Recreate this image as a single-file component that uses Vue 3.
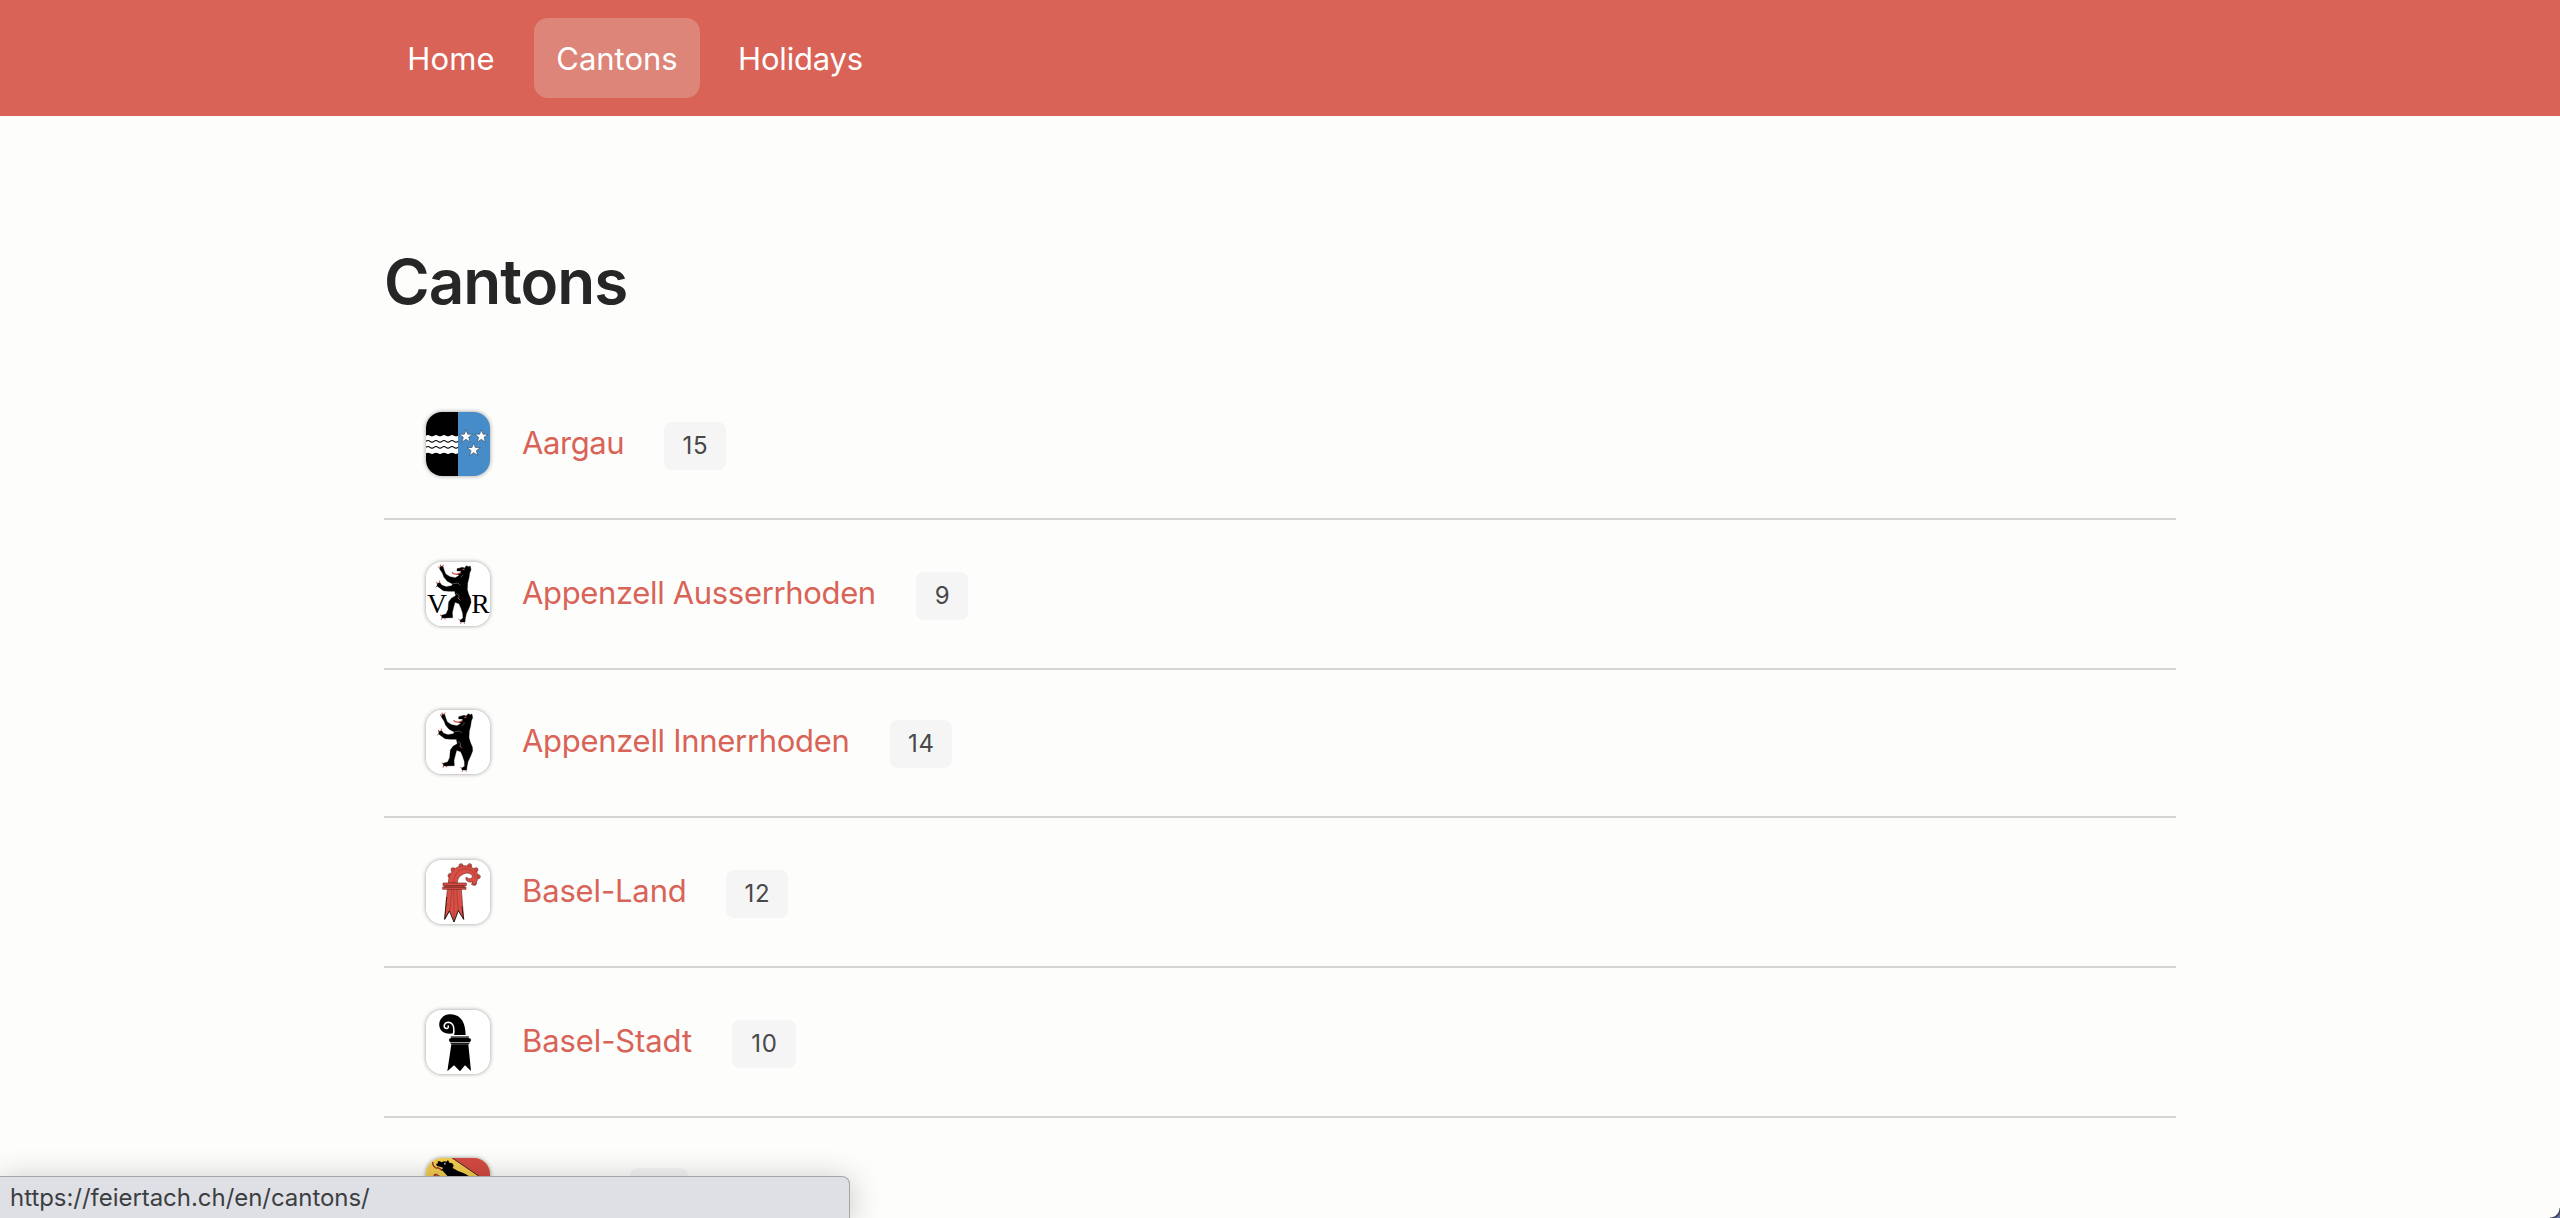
<script setup>
const nav = [
  { label: 'Home', width: 134, tracking: 0.1 },
  { label: 'Cantons', width: 166, active: true },
  { label: 'Holidays', width: 169, tracking: -0.2 },
]

const cantons = [
  { id: 'ag', name: 'Aargau', count: 15, width: 102, badge: 62, tracking: -0.4, box: '33 36 192 192' },
  { id: 'ar', name: 'Appenzell Ausserrhoden', count: 9, width: 354, badge: 52, tracking: -0.34, box: '33 36 192 192' },
  { id: 'ai', name: 'Appenzell Innerrhoden', count: 14, width: 328, badge: 62, tracking: -0.3, box: '33 29 192 192' },
  { id: 'bl', name: 'Basel-Land', count: 12, width: 164, badge: 62, tracking: -0.15, box: '33 29 192 192' },
  { id: 'bs', name: 'Basel-Stadt', count: 10, width: 170, badge: 64, tracking: -0.1, box: '33 29 192 192' },
  { id: 'be', name: 'Bern', count: 11, width: 68, badge: 58, tracking: 0, box: '167 174 192 192' },
]
</script>

<template>
  <div class="page">
    <header class="topbar">
      <nav class="nav">
        <a
          v-for="item in nav"
          :key="item.label"
          class="nav-link"
          :class="{ active: item.active }"
          :style="{ width: item.width + 'px', letterSpacing: (item.tracking || 0) + 'px' }"
        >{{ item.label }}</a>
      </nav>
    </header>

    <main class="content">
      <h1>Cantons</h1>
      <ul class="list">
        <li v-for="c in cantons" :key="c.id" class="row" :class="c.id">
          <svg class="flag" :viewBox="c.box">
            <g v-if="c.id === 'ag'">
              <path fill="#000" d="M33 36h96v192H33z" />
              <path fill="#468cc8" d="M129 36h96v192h-96z" />
              <path fill="#fff" d="M33 107q6-4 12 0t12 0 12 0 12 0 12 0 12 0 12 0 12 0V160q-6 4-12 0t-12 0-12 0-12 0-12 0-12 0-12 0-12 0z" />
              <path class="wave" d="M33 124q6-5 12 0t12 0 12 0 12 0 12 0 12 0 12 0 12 0M33 142q6-5 12 0t12 0 12 0 12 0 12 0 12 0 12 0 12 0" />
              <path
                v-for="(p, i) in [[153, 109], [199, 109], [176, 149]]"
                :key="i"
                class="star"
                :transform="`translate(${p[0]} ${p[1]})`"
                d="M0-20 5-6.5 20-6.2 8 3 12.5 17.5 0 9-12.5 17.5-8 3-20-6.2-5-6.5z"
              />
            </g>

            <g v-else-if="c.id === 'ar' || c.id === 'ai'">
              <path fill="#fff" d="M30 25h200v210H30z" />
              <g v-if="c.id === 'ar'" class="initials">
                <text x="36" y="189" textLength="56">V</text>
                <text x="169" y="189" textLength="52">R</text>
              </g>
              <g :transform="c.id === 'ar' ? 'translate(-5 7)' : ''">
                <path
                  class="bear"
                  d="M131 49 147 45 154 47 159 40 166 43 171 41 173 52 169 62 167 76 163 92 162 112 166 126 172 140 173 151 167 167 159 184 156 199 155 209 141 209 140 204 149 197 148 183 143 168 137 154 125 150 121 164 117 180 118 196 86 197 84 189 98 185 104 172 106 149 114 138 127 130 124 117 106 117 90 115 78 106 71 101 72 93 80 91 86 99 99 103 115 100 118 95 102 87 92 75 87 62 79 50 81 42 89 42 92 52 97 65 110 73 126 76 138 69 131 66 142 61 143 56 131 56z"
                />
                <path class="fur" d="M119 94 134 92 141 99M128 123l9 6-1 10M142 76l7-9" />
                <path class="tongue" d="M142 61 131 66 120 64 116 59M148 52l6-2" />
                <path class="claws" d="M79 49l-3-7M82 43l-1-6M88 43l2-6M71 101l-4 4M72 95l-2-6M79 91l0-6M85 190l-5-2M86 197l-2 5M95 197l0 4M141 204l-5-3M143 210l-1 4M152 210l2 4M133 136l8 8" />
              </g>
            </g>

            <g v-else-if="c.id === 'bl'">
              <path fill="#fff" d="M30 25h200v200H30z" />
              <g class="crozier">
                <path
                  v-for="(p, i) in [[105, 76], [114, 58], [138, 46], [164, 46], [183, 58], [190, 79], [178, 99]]"
                  :key="i"
                  :transform="`translate(${p[0]} ${p[1]})`"
                  d="M-6 0a6 6 0 1 1 12 0a6 6 0 1 1-12 0z"
                />
                <path d="M100 98C101 68 116 48 148 46C176 46 193 66 188 87L181 104L170 103L173 94C160 98 149 90 154 80C160 88 172 87 172 78C170 69 157 65 145 71C133 77 127 85 127 98z" />
                <path class="rib" d="M116 97C116 76 128 57 149 55C169 55 183 69 180 82" />
                <path d="M97 117 89 207 104 181 117 215 130 180 146 207 139 117z" />
                <path class="rib" d="M111 118 104 181M117 118v93M125 118l5 62" />
                <path d="M84 98h70v8H84zM89 106h59v5H89zM83 110h70v7H83z" />
              </g>
              <path class="tips" d="M95 140 89 207l14-25 14 33 13-34 16 26-5-39" />
            </g>

            <g v-else-if="c.id === 'bs'">
              <path fill="#fff" d="M30 25h200v200H30z" />
              <path d="M117 104V98C107 101 94 101 84 95 64 82 70 43 105 42 135 42 151 62 152 104z" />
              <path class="spiral" d="M115 106C119 85 117 68 101 66 87 66 84 80 92 84 99 86 103 79 98 76" />
              <path d="M108 108h54l-1 6h4q6 5 0 11h-60q-6-6 0-11h3zM105 127h60l-4 5h-52z" />
              <path class="band" d="M106 110h56M106 127h57" />
              <path d="M109 132h51l8 80-18-17-15 18-18-18-20 18z" />
            </g>

            <g v-else>
              <path fill="#f1cc4f" d="M167 174h192v192H167z" />
              <path fill="#d24a42" d="M245 174h114v77z" />
              <path class="slash" d="M243 172 360 252" />
              <path d="M197 192 203 190 202 184 209 184 213 187 221 184 228 185 233 180 237 188 246 190 250 197 247 204 263 213 281 220 302 232 310 245H245L232 229 217 212 211 209 219 204 212 201 200 198z" />
              <path class="bern-red" d="M187 186q-1 10 7 16 4 4 8 1 8 3 13 9M185 231l15-8-9 1M198 224l13 7" />
              <circle cx="224" cy="191" r="3" fill="#bbb" /><circle cx="225" cy="192" r="1.5" />
            </g>
          </svg>
          <a class="name" :style="{ width: c.width + 'px', letterSpacing: c.tracking + 'px' }">{{ c.name }}</a>
          <span class="badge" :style="{ width: c.badge + 'px' }">{{ c.count }}</span>
        </li>
      </ul>
    </main>

    <div class="status">https://feiertach.ch/en/cantons/</div>
    <div class="corner"></div>
  </div>
</template>

<style>
body {
  margin: 0;
  overflow: hidden;
  background: #fdfdfc;
}
</style>

<style scoped>
.page {
  position: relative;
  height: 1218px;
  overflow: hidden;
  background: #fdfdfc;
  color: #262626;
  font-family: Inter, "Liberation Sans", sans-serif;
}
.topbar {
  box-sizing: border-box;
  height: 116px;
  padding: 18px 384px;
  background: #d96357;
}
.nav {
  display: flex;
  gap: 16px;
}
.nav-link {
  box-sizing: border-box;
  height: 80px;
  padding-top: 1px;
  border-radius: 14px;
  color: #fff;
  font-size: 31px;
  line-height: 79px;
  text-align: center;
  white-space: nowrap;
}
.nav-link.active {
  background: #dd8578;
}
.content {
  width: 1792px;
  margin: 0 auto;
  padding-top: 126px;
}
h1 {
  margin: 0 0 48px;
  font-size: 62px;
  font-weight: 600;
  line-height: 80px;
  letter-spacing: -1px;
}
.list {
  margin: 0;
  padding: 0;
  list-style: none;
}
.row {
  box-sizing: border-box;
  display: flex;
  align-items: flex-start;
  height: 150px;
  padding: 42px 42px 0;
  border-bottom: 2px solid #d5d5d4;
}
.row.ai,
.row.be {
  height: 148px;
  padding-top: 40px;
}
.flag {
  flex: none;
  width: 64px;
  height: 64px;
  border-radius: 16px;
  box-shadow: 0 0 4px rgba(0, 0, 0, 0.4);
}
.name {
  flex: none;
  margin-left: 32px;
  color: #d96357;
  font-size: 31px;
  line-height: 62px;
  white-space: nowrap;
}
.badge {
  box-sizing: border-box;
  flex: none;
  height: 48px;
  margin: 10px 0 0 40px;
  padding-left: 1px;
  border-radius: 8px;
  background: #f5f5f5;
  color: #484848;
  font-size: 24px;
  line-height: 48px;
  letter-spacing: 0.8px;
  text-align: center;
}
.status {
  position: absolute;
  bottom: 0;
  left: 0;
  box-sizing: border-box;
  width: 850px;
  height: 42px;
  padding-left: 10px;
  border: solid #a5a6a8;
  border-width: 1px 1px 0 0;
  border-radius: 0 8px 0 0;
  background: #dfe0e6;
  box-shadow: 0 4px 32px rgba(0, 0, 0, 0.24);
  color: #3c3f42;
  font-size: 24px;
  line-height: 41px;
  letter-spacing: -0.04px;
}
.corner {
  position: absolute;
  right: 0;
  bottom: 0;
  width: 10px;
  height: 10px;
  background: radial-gradient(circle at 0 0, transparent 9px, #343746 10px, #6673a0 12px);
}
.wave {
  fill: none;
  stroke: #000;
  stroke-width: 3.4;
}
.star {
  fill: #fff;
  stroke: #35506b;
  stroke-width: 2;
}
.initials {
  font-family: "Liberation Serif", serif;
  font-size: 83px;
}
.bear {
  stroke: #000;
  stroke-width: 1;
  stroke-linejoin: round;
}
.fur {
  fill: none;
  stroke: #999;
  stroke-width: 1.5;
}
.tongue,
.claws {
  fill: none;
  stroke: #c9473f;
  stroke-width: 3.5;
}
.claws {
  stroke: #b04c45;
  stroke-width: 3;
}
.crozier path {
  fill: #d94f45;
  stroke: #7d2c27;
  stroke-width: 2;
}
.crozier .rib {
  fill: none;
  stroke: #963a33;
  stroke-width: 2;
}
.tips {
  fill: none;
  stroke: #000;
  stroke-width: 2;
}
.spiral {
  fill: none;
  stroke: #fff;
  stroke-width: 4.5;
}
.band {
  fill: none;
  stroke: #999;
  stroke-width: 3;
}
.slash {
  stroke: #4b2a20;
  stroke-width: 3;
}
.bern-red {
  fill: none;
  stroke: #9c3a2e;
  stroke-width: 4;
}
</style>
